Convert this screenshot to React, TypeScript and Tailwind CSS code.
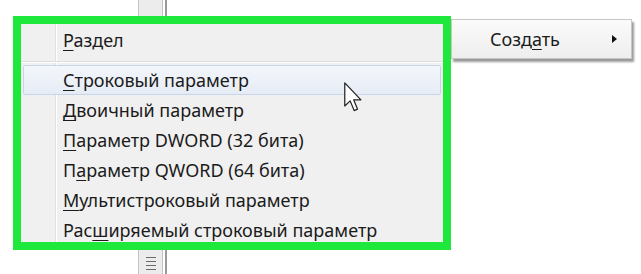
import React from "react";

const font = { fontFamily: '"Noto Sans", "Open Sans", "DejaVu Sans", sans-serif' };

function Item({
  pre,
  u,
  post,
  highlight,
}: {
  pre?: string;
  u: string;
  post: string;
  highlight?: boolean;
}) {
  return (
    <div
      className={
        "h-[30px] flex items-center mx-[2px] " +
        (highlight
          ? "border border-[#c9d6ea] bg-gradient-to-b from-[#f3f6fb] to-[#e6ecf5] rounded-[2px]"
          : "border border-transparent")
      }
    >
      <div className="w-[39px] shrink-0" />
      <span className="text-[18px] text-[#1b1b1b] leading-none whitespace-nowrap">
        {pre}
        <span className="underline underline-offset-[3px] decoration-1 [text-decoration-skip-ink:none]">{u}</span>
        {post}
      </span>
    </div>
  );
}

function ScrollPiece({ grip }: { grip?: boolean }) {
  return (
    <div className="flex h-full ml-[138px]">
      <div className="w-[25px] h-full bg-[#ececec] border-x border-[#c4c4c4] flex justify-center items-center">
        {grip && (
          <div className="flex flex-col gap-[3px] w-[10px] mt-[2px]">
            <div className="h-[1px] bg-[#6a6a6a]" />
            <div className="h-[1px] bg-[#6a6a6a]" />
            <div className="h-[1px] bg-[#6a6a6a]" />
            <div className="h-[1px] bg-[#6a6a6a]" />
          </div>
        )}
      </div>
      <div className="w-[2px]" />
      <div className="w-[2px] h-full bg-[#9a9a9a]" />
    </div>
  );
}

export default function App() {
  return (
    <div className="w-[641px] h-[274px] bg-white relative overflow-hidden" style={font}>
      <div className="h-[16px]">
        <ScrollPiece />
      </div>
      <div className="flex items-start h-[234px]">
        <div className="ml-[13px] w-[438px] h-[234px] border-[8px] border-[#1ee83c] bg-[#f0f0f0] overflow-hidden relative z-10">
          <div className="relative h-full">
            <div className="absolute left-[34px] top-0 bottom-0 w-[2px] flex">
              <div className="w-[1px] bg-[#e0e0e0]" />
              <div className="w-[1px] bg-white" />
            </div>
            <div className="relative pt-[1px]">
              <Item u="Р" post="аздел" />
              <div className="h-[10px] flex flex-col justify-end pb-[2px]">
                <div className="h-[1px] bg-[#dcdcdc]" />
                <div className="h-[1px] bg-white" />
              </div>
              <Item u="С" post="троковый параметр" highlight />
              <Item u="Д" post="воичный параметр" />
              <Item u="П" post="араметр DWORD (32 бита)" />
              <Item pre="П" u="а" post="раметр QWORD (64 бита)" />
              <Item u="М" post="ультистроковый параметр" />
              <Item pre="Рас" u="ш" post="иряемый строковый параметр" />
            </div>
          </div>
        </div>
        <div className="mt-[3px] w-[181px] h-[40px] bg-gradient-to-b from-[#fbfbfb] to-[#eeeeee] border border-[#c6c6c6] shadow-[2px_3px_2px_rgba(0,0,0,0.4)] flex items-center">
          <div className="w-[38px]" />
          <span className="text-[18px] text-[#1b1b1b] leading-none">
            Созд<span className="underline underline-offset-[3px] decoration-1 [text-decoration-skip-ink:none]">а</span>ть
          </span>
          <div className="flex-1" />
          <svg width="5" height="8" viewBox="0 0 5 8" className="mr-[14px]">
            <path d="M0 0 L5 4 L0 8 Z" fill="#111" />
          </svg>
        </div>
      </div>
      <div className="h-[24px]">
        <ScrollPiece grip />
      </div>
      <svg
        className="absolute left-[344px] top-[82px] z-20"
        width="20"
        height="31"
        viewBox="0 0 13 20"
      >
        <path
          d="M0.5 0.5 L0.5 15.5 L4 12.2 L6.6 18.5 L8.8 17.6 L6.3 11.5 L11 11.5 Z"
          fill="white"
          stroke="#222"
          strokeWidth="0.8"
          strokeLinejoin="round"
        />
      </svg>
    </div>
  );
}
